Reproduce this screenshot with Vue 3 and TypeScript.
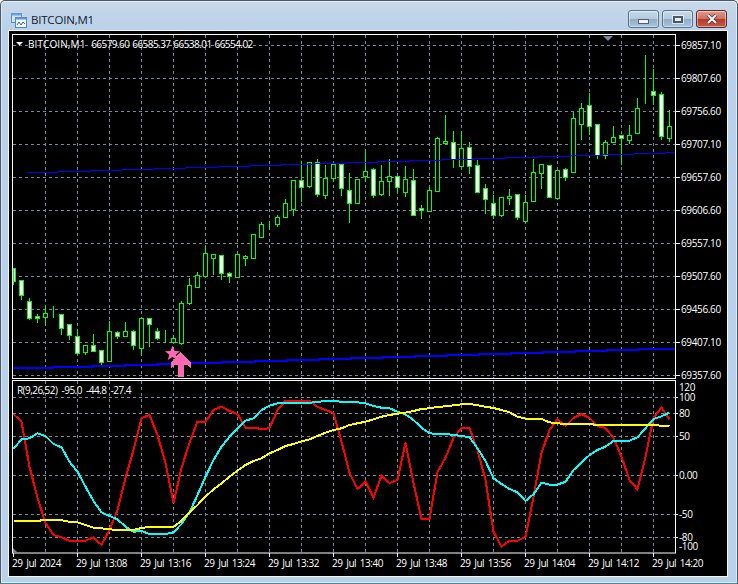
<template>
	<div class="window">
		<div class="titlebar">
			<svg class="app-icon" width="16" height="15" viewBox="0 0 16 15">
				<rect x="0.5" y="0.5" width="10" height="9" fill="#cfe3f7" stroke="#5b8fc4" />
				<rect x="0.5" y="0.5" width="10" height="2" fill="#6fa3d8" />
				<rect x="4.5" y="4.5" width="11" height="10" fill="#f3f8fd" stroke="#4f86c0" />
				<rect x="4.5" y="4.5" width="11" height="2" fill="#5f97d2" />
				<path d="M6 12l2-3 2 3 2-3 2 2" fill="none" stroke="#2f6aa8" />
			</svg>
			<span class="title">BITCOIN,M1</span>
			<div class="buttons">
				<button class="btn">
					<span class="glyph-min"></span>
				</button>
				<button class="btn">
					<span class="glyph-max"></span>
				</button>
				<button class="btn btn-close">
					<svg width="12" height="10" viewBox="0 0 12 10">
						<path d="M2 1l8 8M10 1l-8 8" stroke="#5a2a28" stroke-width="3.6" />
						<path d="M2 1l8 8M10 1l-8 8" stroke="#f4f4f4" stroke-width="2.2" />
					</svg>
				</button>
			</div>
		</div>

		<div class="client">
			<!-- price pane, drawn in window coordinates -->
			<svg class="pane" width="718" height="349" viewBox="9 31 718 349">
				<rect x="12.5" y="34.5" width="663" height="344" fill="none" stroke="#fff" />
				<g class="crisp" stroke="#778899" stroke-dasharray="3 3">
					<line v-for="x in gridX" :key="x" :x1="x + 0.5" y1="35" :x2="x + 0.5" y2="378" />
					<line v-for="p in priceScale" :key="p.label" x1="13" :y1="p.y + 0.5" x2="675" :y2="p.y + 0.5" />
				</g>
				<g class="crisp" stroke="#fff">
					<line v-for="p in priceScale" :key="p.label" x1="676" :y1="p.y + 0.5" x2="680" :y2="p.y + 0.5" />
				</g>
				<text v-for="p in priceScale" :key="p.label" class="label axis" x="681" :y="p.y + 4">{{ p.label }}</text>

				<g class="crisp">
					<g v-for="(c, i) in candles" :key="i">
						<line :x1="barX(i) + 0.5" :y1="c[0]" :x2="barX(i) + 0.5" :y2="c[3]" stroke="#00ff00" />
						<rect
							:x="Math.max(barX(i) - 1.5, 13.5)"
							:y="c[1] + 0.5"
							:width="barX(i) === 13 ? 2 : 4"
							:height="c[2] - c[1]"
							:fill="c[4] ? '#fff' : '#000'"
							stroke="#00ff00"
						/>
					</g>
					<polyline class="ma" :points="stepPoints(maSlow)" stroke-width="1" />
					<polyline class="ma" :points="stepPoints(maFast)" stroke-width="2" />
				</g>

				<polygon
					class="crisp"
					fill="#ff69b4"
					points="180.5,352 191,362.5 191,368.5 187.5,365 183.5,365 183.5,377 178,377 178,365 174.5,365 171,368.5 171,362.5"
				/>
				<polygon
					fill="#ff69b4"
					points="172.5,345.5 174.5,351 180,351.3 175.7,354.7 177.2,360 172.5,357 167.8,360 169.3,354.7 165,351.3 170.5,351"
				/>

				<polygon points="16,42 23,42 19.5,45.5" fill="#fff" />
				<polygon points="603,36 613,36 608,41" fill="#778899" />
				<text class="label legend" x="28" y="47.5"><tspan class="symbol">BITCOIN,M1</tspan>&#160; 66579.60 66585.37 66538.01 66554.02</text>
			</svg>

			<!-- oscillator pane with the time axis -->
			<svg class="pane" width="718" height="194" viewBox="9 380 718 194">
				<rect x="12.5" y="380.5" width="663" height="172.5" fill="none" stroke="#fff" />
				<g class="crisp" stroke="#778899" stroke-dasharray="3 3">
					<line v-for="x in gridX" :key="x" :x1="x + 0.5" y1="381" :x2="x + 0.5" y2="552" />
					<line v-for="y in oscGrid" :key="y" x1="13" :y1="y + 0.5" x2="675" :y2="y + 0.5" />
				</g>
				<g class="crisp" stroke="#fff">
					<line v-for="y in oscGrid" :key="y" x1="676" :y1="y + 0.5" x2="678" :y2="y + 0.5" />
					<line v-for="t in timeScale" :key="t.label" :x1="t.x + 0.5" y1="553" :x2="t.x + 0.5" y2="557" />
				</g>
				<text v-for="o in oscScale" :key="o.label" class="label axis" x="679" :y="o.y + 4">{{ o.label }}</text>
				<text v-for="t in timeScale" :key="t.label" class="label time" :x="t.x - 1" y="567">{{ t.label }}</text>

				<g class="crisp" fill="none" stroke-width="2">
					<polyline :points="seriesPoints(red)" stroke="#ff0000" />
					<polyline :points="seriesPoints(cyan)" stroke="#00ffff" />
					<polyline :points="seriesPoints(yellow)" stroke="#ffff00" />
				</g>

				<polygon points="13,548 13,553 18,553" fill="#778899" />
				<text class="label legend-osc" x="17" y="394">R(9,26,52) -95.0 -44.8 -27.4</text>
			</svg>
		</div>
	</div>
</template>

<script setup lang="ts">
// high, body top, body bottom, low, filled
type Candle = [number, number, number, number, number];

const candles: Candle[] = [
	[268, 268, 281, 285, 1], [280, 280, 295, 300, 1], [298, 301, 318, 320, 1], [314, 316, 318, 323, 1],
	[305, 313, 317, 326, 0], [306, 316, 316, 318, 0], [314, 314, 328, 335, 1], [324, 324, 335, 340, 1],
	[329, 336, 353, 355, 1], [345, 345, 352, 355, 0], [334, 345, 351, 351, 1], [350, 350, 362, 365, 1],
	[321, 331, 361, 362, 0], [331, 332, 336, 339, 1], [322, 331, 336, 337, 0], [330, 331, 345, 350, 1],
	[318, 318, 348, 356, 0], [318, 318, 324, 347, 1], [328, 331, 338, 340, 1], [330, 337, 337, 343, 0],
	[335, 338, 342, 342, 0], [301, 303, 343, 345, 0], [278, 285, 303, 305, 0], [272, 275, 287, 287, 0],
	[246, 253, 276, 276, 0], [254, 254, 258, 275, 0], [255, 255, 273, 280, 1], [272, 273, 276, 283, 1],
	[254, 254, 277, 277, 0], [255, 256, 258, 266, 0], [234, 234, 258, 259, 0], [222, 224, 237, 237, 0],
	[222, 224, 224, 230, 0], [215, 217, 224, 227, 0], [199, 203, 217, 218, 0], [180, 180, 209, 216, 0],
	[161, 180, 187, 202, 1], [162, 162, 186, 188, 0], [159, 162, 194, 197, 1], [165, 178, 195, 199, 0],
	[164, 164, 178, 182, 0], [164, 164, 188, 196, 1], [173, 190, 203, 223, 1], [179, 179, 203, 203, 0],
	[150, 171, 176, 182, 0], [168, 169, 195, 198, 1], [165, 181, 194, 196, 0], [159, 176, 181, 196, 0],
	[176, 176, 187, 193, 1], [166, 179, 192, 197, 0], [169, 180, 215, 215, 1], [205, 208, 210, 219, 1],
	[187, 190, 211, 211, 0], [137, 138, 191, 191, 0], [115, 141, 143, 145, 0], [131, 142, 159, 168, 1],
	[131, 148, 166, 166, 0], [142, 147, 166, 174, 1], [160, 165, 192, 192, 1], [184, 188, 199, 214, 1],
	[195, 203, 215, 219, 1], [197, 197, 215, 217, 0], [189, 196, 198, 205, 0], [194, 194, 217, 220, 1],
	[195, 202, 221, 223, 0], [159, 172, 201, 201, 0], [164, 164, 173, 189, 0], [165, 165, 197, 198, 1],
	[170, 170, 198, 198, 0], [168, 169, 177, 181, 1], [112, 118, 172, 172, 0], [103, 108, 124, 140, 0],
	[93, 105, 126, 135, 1], [124, 124, 155, 159, 1], [140, 142, 155, 159, 0], [126, 137, 142, 142, 0],
	[135, 135, 138, 165, 1], [125, 135, 140, 144, 0], [98, 108, 133, 133, 0], [55, 89, 89, 104, 0],
	[69, 91, 95, 105, 1], [92, 94, 136, 140, 1], [110, 126, 138, 142, 0],
];

const red = [
	414, 421.7, 466.7, 498, 523, 535, 537.3, 540.7, 540.7, 540.7, 537.3, 545, 530, 510, 478, 450, 418, 415, 435, 463, 503,
	468, 443, 421.7, 421.7, 410, 406.7, 411, 414, 427.7, 427.7, 429, 428.3, 410, 400.7, 400.7, 400.7, 400.7, 407, 410, 413,
	441.7, 472.7, 489, 481.7, 497.7, 475.7, 483, 480, 442.7, 483, 519, 519, 472, 457.7, 438, 428, 428, 450, 480, 531.7, 546.7,
	540.7, 540.7, 536.7, 496.7, 453, 430, 419.3, 426, 418, 414, 418, 426, 428, 437.7, 456.7, 480, 489.3, 456.7, 418, 407.3, 419.3,
];
const cyan = [
	449, 439.3, 438.3, 433.3, 436, 444, 447.3, 461.7, 471.7, 486.7, 501, 512.3, 516, 519.3, 526.7, 531.7, 531, 534, 534, 534, 532.3,
	524, 512.3, 495, 476.7, 460, 446.7, 436.7, 428.3, 420.7, 418.3, 410, 405.7, 403.3, 402.7, 402.7, 402.7, 402.7, 402, 401, 401,
	401.7, 402, 402.3, 403.3, 406, 407.7, 408.3, 411.7, 414.3, 420, 427.7, 433.3, 434, 434, 435, 436, 437.3, 448.3, 461, 478.3, 484,
	489, 492.3, 501, 494.3, 482.7, 484.7, 484.7, 481.7, 470, 462.7, 455, 450, 446.7, 441, 440.7, 440.7, 437.3, 428.3, 419, 416.3, 412.7,
];
const yellow = [
	521, 521, 521, 521, 519.7, 519.7, 520.3, 521.7, 522.3, 525, 527.7, 528.3, 529.3, 530, 530, 530, 528, 527, 527, 527, 527,
	520.7, 512.7, 505, 496.7, 489.3, 483.3, 476.7, 470.7, 465, 461, 458.3, 453.3, 450, 446, 444, 441.3, 439.3, 436, 432.7, 430,
	428.3, 425, 423.3, 421.7, 419.3, 416.7, 415, 413.7, 412.7, 411, 409, 408.3, 407, 406.3, 405.3, 404.3, 404, 405.3, 406.7, 408, 410,
	412.3, 416.7, 418.7, 418.7, 419, 422.3, 423.3, 424, 424, 424, 424, 425, 425, 425, 425, 425, 425, 425, 425, 425.7, 426,
];

// [x where the segment ends, y]
const maFast: number[][] = [
	[13, 368], [53, 368], [93, 367], [125, 366], [158, 365], [190, 364], [222, 363], [255, 362], [287, 361], [319, 360],
	[351, 359], [383, 358], [415, 357], [447, 356], [479, 355], [511, 354], [543, 353], [575, 352], [607, 351], [639, 350], [675, 349],
];
const maSlow: number[][] = [
	[27, 172], [57, 172], [89, 171], [121, 170], [153, 169], [185, 168], [217, 167], [249, 166], [281, 165], [313, 164], [345, 163],
	[377, 162], [409, 161], [441, 160], [473, 159], [505, 158], [537, 157], [569, 156], [601, 155], [633, 154], [665, 153], [675, 152],
];

const gridX = Array.from({ length: 20 }, (_, i) => 45 + i * 32);

const priceScale = [
	{ y: 45, label: "69857.10" },
	{ y: 78, label: "69807.60" },
	{ y: 111, label: "69756.60" },
	{ y: 144, label: "69707.10" },
	{ y: 177, label: "69657.60" },
	{ y: 210, label: "69606.60" },
	{ y: 243, label: "69557.10" },
	{ y: 276, label: "69507.60" },
	{ y: 309, label: "69456.60" },
	{ y: 342, label: "69407.10" },
	{ y: 375, label: "69357.60" },
];

const oscGrid = [397, 413, 436, 475, 514, 537];
const oscScale = [
	{ y: 387, label: "120" },
	{ y: 397, label: "100" },
	{ y: 413, label: "80" },
	{ y: 436, label: "50" },
	{ y: 475, label: "0.00" },
	{ y: 514, label: "-50" },
	{ y: 537, label: "-80" },
	{ y: 546, label: "-100" },
];

const timeScale = [
	{ x: 13, label: "29 Jul 2024" },
	{ x: 77, label: "29 Jul 13:08" },
	{ x: 141, label: "29 Jul 13:16" },
	{ x: 205, label: "29 Jul 13:24" },
	{ x: 269, label: "29 Jul 13:32" },
	{ x: 333, label: "29 Jul 13:40" },
	{ x: 397, label: "29 Jul 13:48" },
	{ x: 461, label: "29 Jul 13:56" },
	{ x: 525, label: "29 Jul 14:04" },
	{ x: 589, label: "29 Jul 14:12" },
	{ x: 653, label: "29 Jul 14:20" },
];

const barX = (i: number) => 13 + i * 8;

const seriesPoints = (values: number[]) => values.map((y, i) => `${barX(i) + 0.5},${y}`).join(" ");

// horizontal runs with a one pixel step at each end
const stepPoints = (segments: number[][]) => {
	const pts: string[] = [];
	segments.forEach(([x, y], i) => {
		if (i > 0) pts.push(`${segments[i - 1][0]},${y}`);
		pts.push(`${x},${y}`);
	});
	return pts.join(" ");
};
</script>

<style scoped>
.window {
	box-sizing: border-box;
	width: 738px;
	height: 584px;
	display: flex;
	flex-direction: column;
	border: 1px solid #46586a;
	border-bottom-color: #3f8f9f;
	border-radius: 5px 5px 0 0;
	background: linear-gradient(#c9d8e8, #b9d1ea 30px);
	box-shadow: inset 0 0 0 1px rgba(255, 255, 255, 0.55);
	overflow: hidden;
}

.titlebar {
	height: 30px;
	display: flex;
	align-items: center;
	padding: 0 10px 0 10px;
	flex: none;
}

.app-icon {
	margin-top: 9px;
	flex: none;
}

.title {
	margin: 7px 0 0 4px;
	font: 11.5px "Open Sans", "Liberation Sans", sans-serif;
	letter-spacing: -0.2px;
	color: #10202c;
}

.buttons {
	margin-left: auto;
	margin-top: 6px;
	display: flex;
	gap: 3px;
}

.btn {
	width: 31px;
	height: 18px;
	padding: 0;
	display: flex;
	align-items: center;
	justify-content: center;
	border: 1px solid #5d7186;
	border-radius: 3px;
	background: linear-gradient(#c9dbec, #b3c9de 48%, #92acc6 52%, #a8c3dc);
	box-shadow: inset 0 0 0 1px rgba(255, 255, 255, 0.45);
}

.btn-close {
	border-color: #5a2a2e;
	background: linear-gradient(#e09a8c, #cf6f60 48%, #b53a28 52%, #c45a48);
}

.glyph-min {
	width: 9px;
	height: 3px;
	margin-top: 5px;
	background: #f2f5f8;
	border: 1px solid #4d5f70;
}

.glyph-max {
	width: 6px;
	height: 3px;
	border: 2px solid #46586a;
	background: #e8eef4;
	outline: 1px solid rgba(255, 255, 255, 0.6);
}

.client {
	margin: 0 0 7px 8px;
	width: 718px;
	flex: 1;
	align-self: flex-start;
	background: #000;
	outline: 1px solid #f4f8fc;
}

.pane {
	display: block;
	overflow: visible;
}

.crisp {
	shape-rendering: crispEdges;
}

.ma {
	fill: none;
	stroke: #0000ff;
}

.label {
	font: 10px "Open Sans", "Liberation Sans", sans-serif;
	letter-spacing: -0.55px;
	fill: #fff;
}

.axis {
	letter-spacing: -0.35px;
}

.legend {
	word-spacing: 0.8px;
}

.legend-osc {
	word-spacing: 2.2px;
}

.symbol {
	letter-spacing: 0.1px;
}

.time {
	word-spacing: 1.5px;
	letter-spacing: -0.45px;
}
</style>

<style>
html,
body {
	margin: 0;
	background: #fff;
}
</style>
